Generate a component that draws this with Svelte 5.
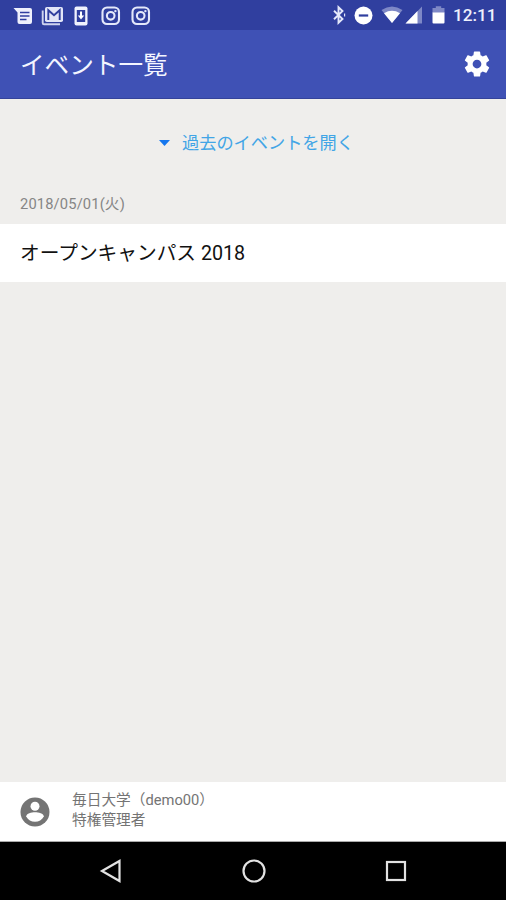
<script>
  const events = [{ date: '2018/05/01(火)', title: 'オープンキャンパス 2018' }];
  const user = { school: '毎日大学', id: 'demo00', role: '特権管理者' };
</script>

{#snippet camera()}
  <svg width="20" height="20" viewBox="0 0 20 20" fill="none" stroke="#e4e8fa" stroke-width="2.1">
    <rect x="1.5" y="1.5" width="16.5" height="16.5" rx="4.5" />
    <circle cx="9.7" cy="9.8" r="3.8" />
    <circle cx="14.4" cy="5.1" r="1.2" fill="#e4e8fa" stroke="none" />
  </svg>
{/snippet}

<div class="screen">
  <div class="status">
    <div class="notifications">
      <svg width="20" height="20" viewBox="0 0 20 20">
        <path d="M.5 2H17q2 0 2 2v12q0 2-2 2H6.500q-2 0-2-2V6.500Z" fill="#eef0fc" />
        <path d="M7 6.500h9.500M7 10h9.500M7 13.500h6.500" stroke="#303f9f" stroke-width="1.500" />
      </svg>
      <svg width="23" height="20" viewBox="0 0 23 20">
        <path d="M1.700 4.500V17q0 1.300 1.300 1.300H19" fill="none" stroke="#cfd4ef" stroke-width="1.900" />
        <rect x="4" y="1" width="18" height="15" rx="1.800" fill="#e2e5f7" />
        <path d="M7.300 14V4.200l5.700 5 5.700-5V14" fill="none" stroke="#303f9f" stroke-width="1.900" />
      </svg>
      <svg width="14" height="20" viewBox="0 0 14 20">
        <rect x=".5" y=".5" width="13" height="19" rx="2" fill="#f0f2fd" />
        <path d="M2.800 4h8.400v12H2.800Z" fill="#303f9f" />
        <path d="M7 5.500v5" stroke="#fff" stroke-width="2" />
        <path d="m3.800 9.500 3.200 4 3.200-4Z" fill="#fff" />
      </svg>
      {@render camera()}
      {@render camera()}
    </div>
    <div class="system">
      <svg width="14" height="20" viewBox="0 0 14 20" fill="none" stroke="#e4e8fa" stroke-width="1.900">
        <path d="m2 5.700 8.500 8.300-4 3.800V2.200l4 3.800L2 14.300" />
        <path d="M12.600 8.500v3" stroke-width="1.200" />
      </svg>
      <svg width="19" height="19" viewBox="0 0 19 19">
        <circle cx="9.500" cy="9.500" r="9" fill="#fff" />
        <path d="M4.800 9.500h9.400" stroke="#303f9f" stroke-width="2.200" />
      </svg>
      <svg class="wifi" width="22" height="18" viewBox="0 0 22 18">
        <path d="M.5 4Q11-3 21.500 4L11 17Z" fill="#7e88c6" />
        <path d="M3 7.200Q11 2.500 19 7.200L11 17Z" fill="#fff" />
      </svg>
      <svg class="signal" width="18" height="18" viewBox="0 0 18 18">
        <path d="M17 .5v17H.5Z" fill="#7e88c6" />
        <path d="M12.500 5v12.500H.5Z" fill="#fff" />
      </svg>
      <svg class="battery" width="13" height="18" viewBox="0 0 13 18">
        <path d="M.5 2h3.300V.2h5.400V2h3.300v5H.5Z" fill="#7e88c6" />
        <path d="M.5 6.500h12v10q0 1-1 1h-10q-1 0-1-1Z" fill="#fff" />
      </svg>
      <span class="time">12:11</span>
    </div>
  </div>

  <header>
    <h1>イベント一覧</h1>
    <button class="settings" aria-label="設定">
      <svg width="30" height="30" viewBox="0 0 24 24" fill="#fff">
        <path d="M19.430 12.980c.04-.32.07-.64.07-.98s-.03-.66-.07-.98l2.110-1.650c.19-.15.24-.42.12-.64l-2-3.460c-.12-.22-.39-.3-.61-.22l-2.490 1c-.52-.4-1.080-.73-1.690-.98l-.38-2.650C14.460 2.180 14.250 2 14 2h-4c-.25 0-.46.18-.49.42l-.38 2.650c-.61.25-1.170.59-1.690.98l-2.490-1c-.23-.09-.49 0-.61.22l-2 3.460c-.13.22-.07.49.12.64l2.110 1.650c-.04.32-.07.65-.07.98s.03.66.07.98l-2.110 1.650c-.19.15-.24.42-.12.64l2 3.460c.12.22.39.3.61.22l2.490-1c.52.4 1.080.73 1.690.98l.38 2.650c.03.24.24.42.49.42h4c.25 0 .46-.18.49-.42l.38-2.650c.61-.25 1.170-.59 1.690-.98l2.490 1c.23.09.49 0 .61-.22l2-3.460c.12-.22.07-.49-.12-.64l-2.110-1.650zM12 15.500c-1.930 0-3.500-1.570-3.500-3.500s1.570-3.500 3.500-3.500 3.500 1.570 3.500 3.500-1.570 3.500-3.500 3.500z" />
      </svg>
    </button>
  </header>

  <main>
    <button class="past">
      <svg width="11" height="6" viewBox="0 0 11 6"><path d="M0 0h11L5.500 6Z" fill="#1677ee" /></svg>
      <span>過去のイベントを開く</span>
    </button>
    {#each events as event}
      <div class="date">{event.date}</div>
      <div class="event">{event.title}</div>
    {/each}
  </main>

  <footer>
    <svg width="30" height="30" viewBox="0 0 30 30">
      <circle cx="15" cy="15" r="14.500" fill="#747474" />
      <circle cx="15" cy="9.300" r="4.500" fill="#fff" />
      <path d="M6.200 19.500C6.200 16.500 11.500 15.200 15 15.200s8.800 1.300 8.800 4.300C22 22.800 18.800 24.800 15 24.800s-7-2-8.800-5.300Z" fill="#fff" />
    </svg>
    <div class="account">
      <div>{user.school}（{user.id}）</div>
      <div>{user.role}</div>
    </div>
  </footer>

  <nav>
    <svg width="24" height="26" viewBox="0 0 24 26"><path d="M3 13 20.500 3v20Z" /></svg>
    <svg width="26" height="26" viewBox="0 0 26 26"><circle cx="13" cy="13" r="10.500" /></svg>
    <svg width="24" height="26" viewBox="0 0 24 26"><rect x="3" y="4" width="18" height="18" /></svg>
  </nav>
</div>

<style>
  .screen {
    display: flex;
    flex-direction: column;
    width: 506px;
    height: 900px;
    overflow: hidden;
    background: #efeeec;
    font-family: Roboto, "Noto Sans CJK JP", sans-serif;
  }
  svg { display: block; flex: none; }
  button { padding: 0; border: 0; background: none; font: inherit; }
  .status {
    display: flex;
    justify-content: space-between;
    box-sizing: border-box;
    flex: none;
    height: 30px;
    padding: 0 10px 0 13px;
    background: #303f9f;
  }
  .notifications, .system { display: flex; align-items: center; }
  .notifications svg:nth-child(2) { margin-left: 8px; }
  .notifications svg:nth-child(3) { margin-left: 10px; }
  .notifications svg:nth-child(4) { margin-left: 13px; }
  .notifications svg:nth-child(5) { margin-left: 10px; }
  .system svg:nth-child(2) { margin-left: 8px; }
  .notifications { padding-top: 1px; }
  .wifi { margin-left: 8px; }
  .signal { margin-left: 2px; }
  .battery { margin-left: 9px; }
  .time {
    width: 43px;
    margin-left: 8px;
    color: #eef0fc;
    font-size: 17.200px;
    font-weight: 500;
    line-height: 32px;
    white-space: nowrap;
  }
  header {
    display: flex;
    align-items: center;
    justify-content: space-between;
    box-sizing: border-box;
    flex: none;
    height: 69px;
    padding: 0 14px 0 20px;
    border-bottom: 1px solid #34439a;
    background: #3f51b5;
  }
  h1 {
    margin: 0;
    padding-top: 3px;
    color: #f3f5ff;
    font-size: 24.600px;
    font-weight: 400;
    line-height: 36px;
  }
  main { flex: 1; }
  .past {
    display: flex;
    align-items: center;
    justify-content: center;
    gap: 12px;
    width: 100%;
    height: 88px;
    padding-left: 7px;
    color: #42a5e6;
    font-size: 17.200px;
    line-height: 24px;
  }
  .date {
    height: 37px;
    padding-left: 20px;
    color: #858585;
    font-size: 14.700px;
    letter-spacing: .15px;
    line-height: 35px;
  }
  .event {
    height: 58px;
    padding-left: 20px;
    background: #fff;
    color: #111;
    font-size: 19.700px;
    line-height: 60px;
  }
  footer {
    display: flex;
    align-items: center;
    box-sizing: border-box;
    flex: none;
    height: 60px;
    padding-left: 20px;
    border-bottom: 1px solid #aaa;
    background: #fff;
  }
  .account {
    margin: -3px 0 0 22px;
    color: #747474;
    font-size: 14.700px;
    line-height: 20px;
  }
  nav {
    display: flex;
    align-items: center;
    justify-content: space-between;
    box-sizing: border-box;
    flex: none;
    height: 58px;
    padding: 0 98px 0 99px;
    background: #000;
  }
  nav svg { fill: none; stroke: #e2e2e2; stroke-width: 2.200; }
</style>
